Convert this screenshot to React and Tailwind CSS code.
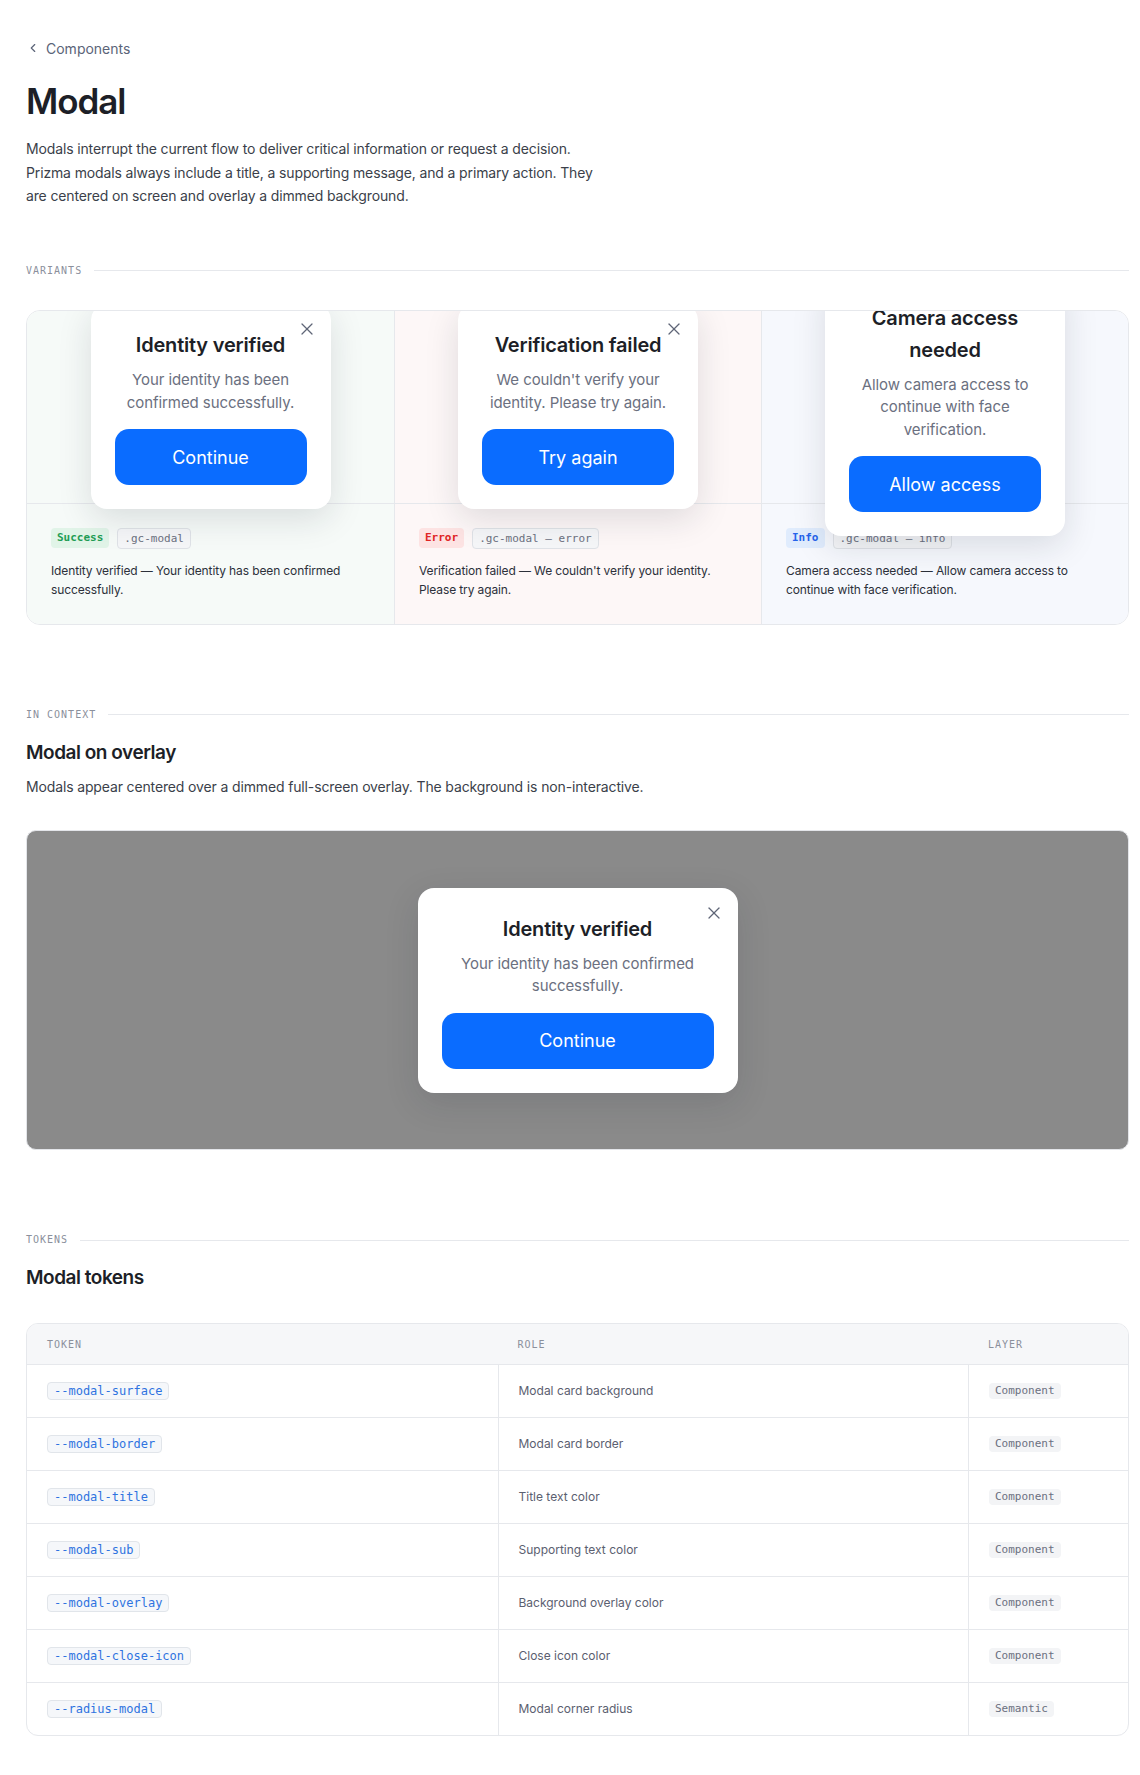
import React from "react"
import { ChevronLeft, X } from "lucide-react"

const variants = [
  {
    tint: "bg-[#f6faf8]",
    title: "Identity verified",
    text: "Your identity has been confirmed successfully.",
    action: "Continue",
    badge: "Success",
    badgeClass: "bg-[#e1f4e8] text-[#1f9d55]",
    tag: ".gc-modal",
    note: "Identity verified — Your identity has been confirmed successfully.",
  },
  {
    tint: "bg-[#fdf7f7]",
    title: "Verification failed",
    text: "We couldn't verify your identity. Please try again.",
    action: "Try again",
    badge: "Error",
    badgeClass: "bg-[#fde3e3] text-[#e02424]",
    tag: ".gc-modal — error",
    note: "Verification failed — We couldn't verify your identity. Please try again.",
  },
  {
    tint: "bg-[#f6f8fd]",
    title: "Camera access needed",
    text: "Allow camera access to continue with face verification.",
    action: "Allow access",
    badge: "Info",
    badgeClass: "bg-[#e0ecfd] text-[#2563eb]",
    tag: ".gc-modal — info",
    note: "Camera access needed — Allow camera access to continue with face verification.",
  },
]

const tokens = [
  ["--modal-surface", "Modal card background", "Component"],
  ["--modal-border", "Modal card border", "Component"],
  ["--modal-title", "Title text color", "Component"],
  ["--modal-sub", "Supporting text color", "Component"],
  ["--modal-overlay", "Background overlay color", "Component"],
  ["--modal-close-icon", "Close icon color", "Component"],
  ["--radius-modal", "Modal corner radius", "Semantic"],
]

function SectionLabel({ children, className = "" }) {
  return (
    <div className={`flex items-center gap-3 ${className}`}>
      <span className="font-['DejaVu_Sans_Mono',monospace] text-[10px] uppercase leading-4 tracking-[0.1em] text-[#8b909c]">
        {children}
      </span>
      <span className="h-px flex-1 bg-[#e6e8ec]" />
    </div>
  )
}

function Modal({ title, text, action, className = "" }) {
  return (
    <div
      className={`relative z-10 shrink-0 rounded-2xl bg-white px-6 pb-6 pt-[25px] text-center shadow-[0_10px_34px_rgba(20,28,45,0.13)] ${className}`}
    >
      <button className="absolute right-[14px] top-[15px] flex h-5 w-5 items-center justify-center text-[#5f6577]">
        <X size={20} strokeWidth={1.5} />
      </button>
      <h3 className="text-[20px] font-semibold leading-8 tracking-[-0.01em] text-[#1d1f27]">{title}</h3>
      <p className="mt-2 text-[15px] leading-[22.5px] tracking-[-0.005em] text-[#6b7080]">{text}</p>
      <button className="mt-[15px] h-14 w-full rounded-[14px] bg-[#0a6cff] text-[18px] text-white">
        {action}
      </button>
    </div>
  )
}

export default function App() {
  return (
    <div className="min-h-screen bg-white font-['Inter',sans-serif] text-[#1d1f27]">
      <div className="pb-10 pl-[26px] pr-[11px] pt-[38px]">
        <a className="flex h-5 items-center gap-1.5 text-[14px] text-[#5b6478]">
          <ChevronLeft size={14} strokeWidth={2} />
          Components
        </a>

        <h1 className="mt-[21px] text-[35px] font-semibold leading-[44px] tracking-[-0.03em] text-[#1d1f27]">
          Modal
        </h1>
        <p className="mt-[14px] max-w-[576px] text-[14px] leading-[23.5px] tracking-[-0.01em] text-[#3b3f4a]">
          Modals interrupt the current flow to deliver critical information or request a decision.
          Prizma modals always include a title, a supporting message, and a primary action. They
          are centered on screen and overlay a dimmed background.
        </p>

        <SectionLabel className="mt-[55px]">Variants</SectionLabel>

        <div className="mt-[31px] grid grid-cols-3 overflow-hidden rounded-[14px] border border-[#e6e8ec]">
          {variants.map((v, i) => (
            <div key={v.badge} className={`flex flex-col ${v.tint} ${i > 0 ? "border-l border-[#e6e8ec]" : ""}`}>
              <div className="flex h-[192px] items-center justify-center">
                <Modal title={v.title} text={v.text} action={v.action} className="w-60" />
              </div>
              <div className="border-t border-[#e6e8ec] px-6 pb-6 pt-6">
                <div className="flex items-center gap-2">
                  <span
                    className={`rounded-[4px] px-1.5 font-['DejaVu_Sans_Mono',monospace] text-[11px] font-semibold leading-5 ${v.badgeClass}`}
                  >
                    {v.badge}
                  </span>
                  <span className="rounded-[4px] border border-[#dfe2e7] bg-[#f5f6f8] px-1.5 font-['DejaVu_Sans_Mono',monospace] text-[11px] leading-[19px] text-[#6b7080]">
                    {v.tag}
                  </span>
                </div>
                <p className="mt-3 text-[12px] leading-[19.5px] tracking-[-0.01em] text-[#2c303a]">{v.note}</p>
              </div>
            </div>
          ))}
        </div>

        <SectionLabel className="mt-[82px]">In context</SectionLabel>
        <h2 className="mt-4 text-[19px] font-semibold leading-7 tracking-[-0.025em] text-[#1d1f27]">
          Modal on overlay
        </h2>
        <p className="mt-2 text-[14px] leading-[23.5px] tracking-[-0.01em] text-[#3b3f4a]">
          Modals appear centered over a dimmed full-screen overlay. The background is non-interactive.
        </p>

        <div className="mt-8 flex h-[320px] items-center justify-center rounded-[10px] border border-[#e3e5e9] bg-[#8a8a8a]">
          <Modal
            title="Identity verified"
            text="Your identity has been confirmed successfully."
            action="Continue"
            className="w-80 shadow-[0_10px_30px_rgba(0,0,0,0.12)]"
          />
        </div>

        <SectionLabel className="mt-[82px]">Tokens</SectionLabel>
        <h2 className="mt-4 text-[19px] font-semibold leading-7 tracking-[-0.025em] text-[#1d1f27]">
          Modal tokens
        </h2>

        <div className="mt-[31px] overflow-hidden rounded-xl border border-[#e6e8ec]">
          <div className="grid h-10 grid-cols-[1fr_1fr_160px] items-center bg-[#f6f7f9] font-['DejaVu_Sans_Mono',monospace] text-[10px] tracking-[0.1em] text-[#8b909c]">
            <div className="px-5">TOKEN</div>
            <div className="px-5">ROLE</div>
            <div className="px-5">LAYER</div>
          </div>
          {tokens.map(([token, role, layer]) => (
            <div key={token} className="grid h-[53px] grid-cols-[1fr_1fr_160px] border-t border-[#e6e8ec]">
              <div className="flex items-center px-5">
                <code className="rounded-[4px] border border-[#e1e5ea] bg-[#f5f7fa] px-1.5 font-['DejaVu_Sans_Mono',monospace] text-[12px] leading-4 text-[#2f73e0]">
                  {token}
                </code>
              </div>
              <div className="flex items-center border-l border-[#e6e8ec] px-5 text-[12px] text-[#5b6070]">
                {role}
              </div>
              <div className="flex items-center border-l border-[#e6e8ec] px-5">
                <span className="rounded-[4px] bg-[#f3f4f6] px-1.5 font-['DejaVu_Sans_Mono',monospace] text-[11px] leading-4 text-[#6b7080]">
                  {layer}
                </span>
              </div>
            </div>
          ))}
        </div>
      </div>
    </div>
  )
}
